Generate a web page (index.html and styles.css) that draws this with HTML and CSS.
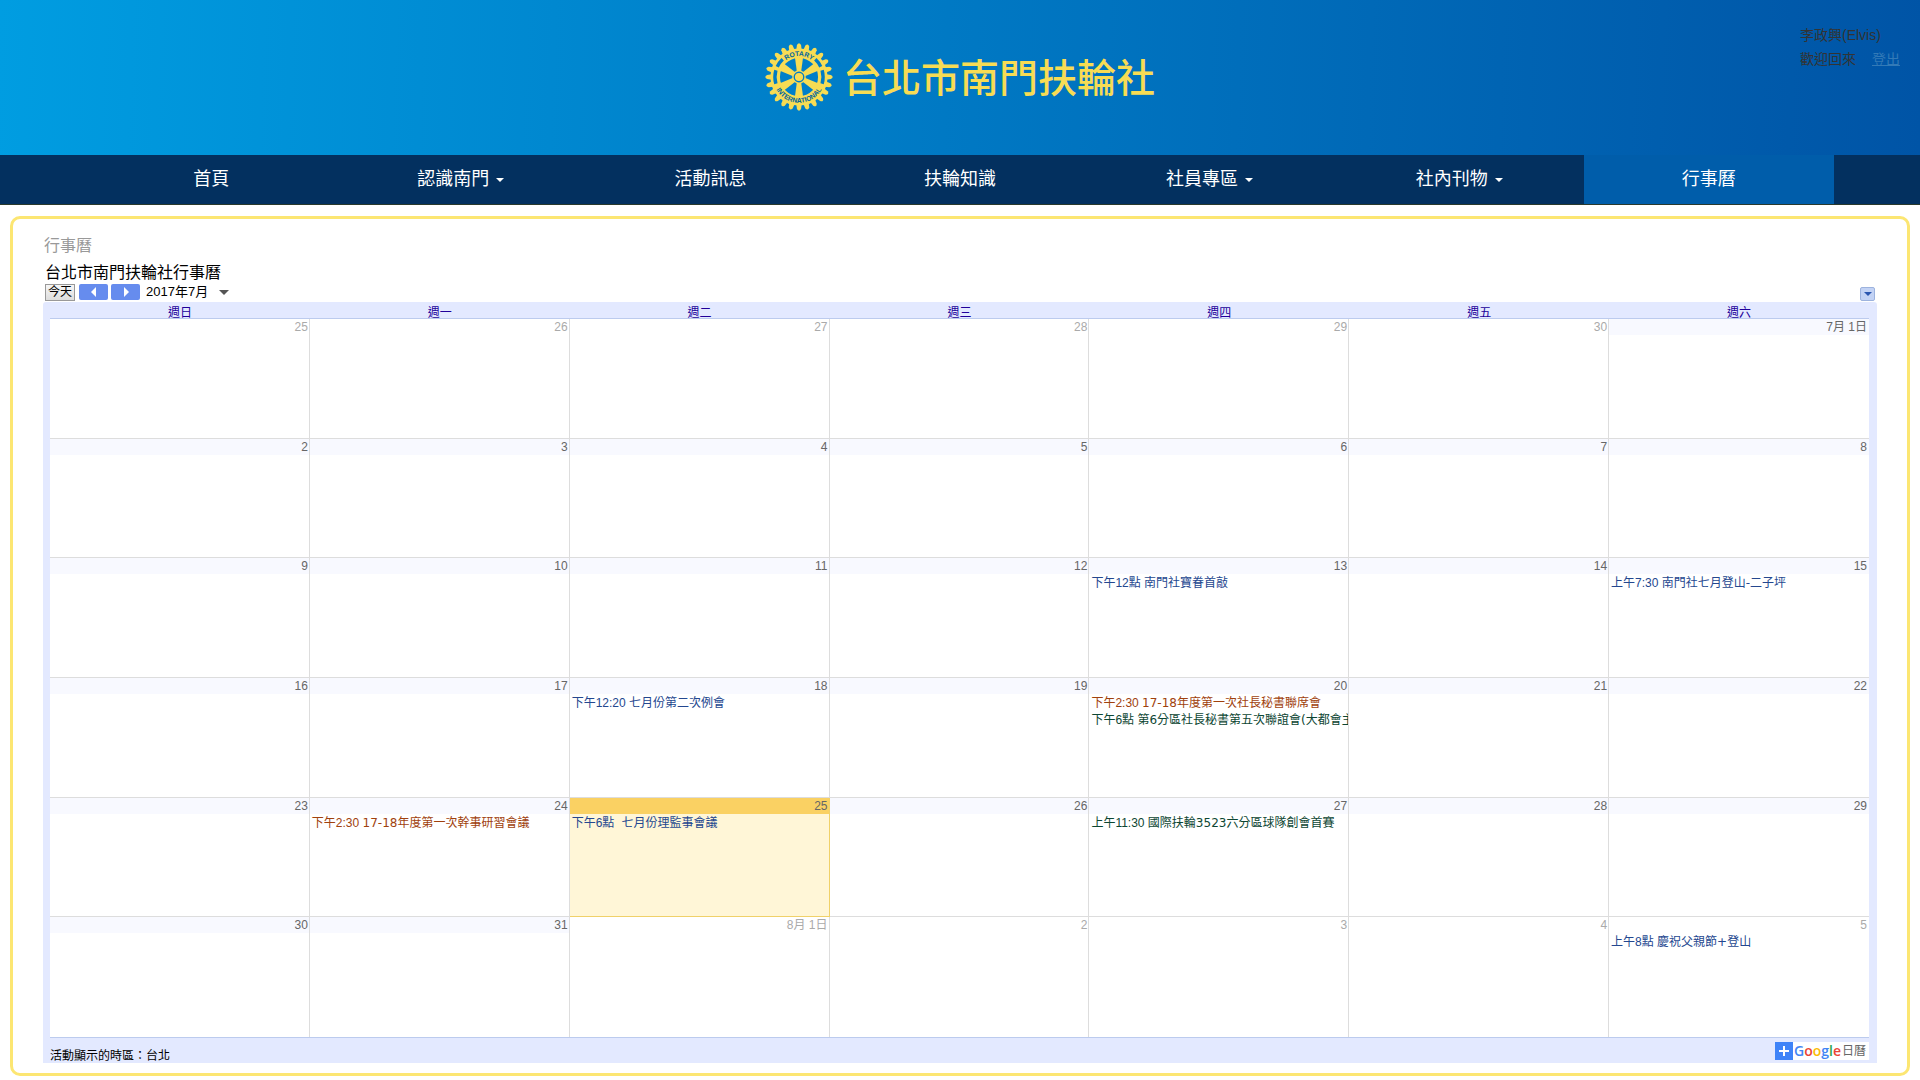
FILE: index.html
```html
<!DOCTYPE html>
<html lang="zh-Hant">
<head>
<meta charset="utf-8">
<meta name="viewport" content="width=device-width, initial-scale=1">
<title>台北市南門扶輪社</title>
<link rel="stylesheet" href="styles.css">
</head>
<body>
<header class="banner">
  <h1 class="brand">
    <svg class="wheel" viewBox="-50 -50 100 100" aria-hidden="true">
      <defs>
        <path id="arc-top" d="M-31 0 A31 31 0 0 1 31 0"/>
        <path id="arc-bottom" d="M-38 0 A38 38 0 0 0 38 0"/>
        <path id="tooth" d="M-4 -40 L-3 -47 Q0 -52 3 -47 L4 -40 Z"/>
        <path id="spoke" d="M-6 -29 L-3 -7 H3 L6 -29 Z"/>
      </defs>
      <g class="gold" id="teeth"></g>
      <circle class="gold-line" r="35" stroke-width="14"/>
      <path class="gap-line" d="M-34 -10 A35.500 35.500 0 0 0 -34 10 M34 -10 A35.500 35.500 0 0 1 34 10" stroke-width="5"/>
      <path class="gap-line" d="M-32 -15 A35.500 35.500 0 0 1 -24 -26 M32 -15 A35.500 35.500 0 0 0 24 -26" stroke-width="5"/>
      <g class="gold" id="spokes"></g>
      <circle class="gold" r="10"/>
      <circle class="gap-line" r="7" stroke-width="2"/>
      <text class="wheel-text"><textPath href="#arc-top" startOffset="50%">ROTARY</textPath></text>
      <text class="wheel-text"><textPath href="#arc-bottom" startOffset="50%">INTERNATIONAL</textPath></text>
    </svg>
    <span>台北市南門扶輪社</span>
  </h1>
  <div class="user">
    <div>李政興(Elvis)</div>
    <div class="user-row"><span>歡迎回來</span><a href="#logout">登出</a></div>
  </div>
</header>
<nav class="nav">
  <a href="#home">首頁</a>
  <a href="#about">認識南門<i class="caret"></i></a>
  <a href="#news">活動訊息</a>
  <a href="#knowledge">扶輪知識</a>
  <a href="#members">社員專區<i class="caret"></i></a>
  <a href="#journal">社內刊物<i class="caret"></i></a>
  <a href="#calendar" class="active">行事曆</a>
</nav>
<main class="panel">
  <h2 class="crumb">行事曆</h2>
  <h3 class="cal-title">台北市南門扶輪社行事曆</h3>
  <div class="toolbar">
    <button class="today-btn" type="button">今天</button>
    <button class="step" type="button" aria-label="上個月"><svg viewBox="0 0 6 10"><path d="M5 0V10L0 5Z"/></svg></button>
    <button class="step" type="button" aria-label="下個月"><svg viewBox="0 0 6 10"><path d="M1 0V10L6 5Z"/></svg></button>
    <button class="month" type="button">2017年7月<i class="caret-lg"></i></button>
    <button class="options" type="button" aria-label="選項"><i class="caret-blue"></i></button>
  </div>
  <section class="calendar">
    <table class="grid">
      <thead><tr><th>週日</th><th>週一</th><th>週二</th><th>週三</th><th>週四</th><th>週五</th><th>週六</th></tr></thead>
      <tbody>
        <tr>
          <td class="other"><div class="date">25</div></td>
          <td class="other"><div class="date">26</div></td>
          <td class="other"><div class="date">27</div></td>
          <td class="other"><div class="date">28</div></td>
          <td class="other"><div class="date">29</div></td>
          <td class="other"><div class="date">30</div></td>
          <td><div class="date">7月 1日</div></td>
        </tr>
        <tr>
          <td><div class="date">2</div></td>
          <td><div class="date">3</div></td>
          <td><div class="date">4</div></td>
          <td><div class="date">5</div></td>
          <td><div class="date">6</div></td>
          <td><div class="date">7</div></td>
          <td><div class="date">8</div></td>
        </tr>
        <tr>
          <td><div class="date">9</div></td>
          <td><div class="date">10</div></td>
          <td><div class="date">11</div></td>
          <td><div class="date">12</div></td>
          <td><div class="date">13</div><a class="event blue" href="#e1">下午12點 <span>南門社寶眷首敲</span></a></td>
          <td><div class="date">14</div></td>
          <td><div class="date">15</div><a class="event blue" href="#e2">上午7:30 <span>南門社七月登山-二子坪</span></a></td>
        </tr>
        <tr>
          <td><div class="date">16</div></td>
          <td><div class="date">17</div></td>
          <td><div class="date">18</div><a class="event blue" href="#e3">下午12:20 <span>七月份第二次例會</span></a></td>
          <td><div class="date">19</div></td>
          <td><div class="date">20</div><a class="event rust" href="#e4">下午2:30 <span>17-18年度第一次社長秘書聯席會</span></a><a class="event green" href="#e5">下午6點 <span>第6分區社長秘書第五次聯誼會(大都會主</span></a></td>
          <td><div class="date">21</div></td>
          <td><div class="date">22</div></td>
        </tr>
        <tr>
          <td><div class="date">23</div></td>
          <td><div class="date">24</div><a class="event rust" href="#e6">下午2:30 <span>17-18年度第一次幹事研習會議</span></a></td>
          <td class="today"><div class="date">25</div><a class="event blue" href="#e7">下午6點 <span>&nbsp;七月份理監事會議</span></a></td>
          <td><div class="date">26</div></td>
          <td><div class="date">27</div><a class="event green" href="#e8">上午11:30 <span>國際扶輪3523六分區球隊創會首賽</span></a></td>
          <td><div class="date">28</div></td>
          <td><div class="date">29</div></td>
        </tr>
        <tr>
          <td><div class="date">30</div></td>
          <td><div class="date">31</div></td>
          <td class="other"><div class="date">8月 1日</div></td>
          <td class="other"><div class="date">2</div></td>
          <td class="other"><div class="date">3</div></td>
          <td class="other"><div class="date">4</div></td>
          <td class="other"><div class="date">5</div><a class="event blue" href="#e9">上午8點 <span>慶祝父親節+登山</span></a></td>
        </tr>
      </tbody>
    </table>
    <footer class="cal-foot">
      <span>活動顯示的時區：台北</span>
      <a class="gcal" href="#google">
        <svg class="plus" viewBox="0 0 18 18" aria-hidden="true"><path d="M9 4V14M4 9H14"/></svg>
        <span class="google"><b class="g-blue">G</b><b class="g-red">o</b><b class="g-yellow">o</b><b class="g-blue">g</b><b class="g-green">l</b><b class="g-red">e</b></span>
        <span class="g-label">日曆</span>
      </a>
    </footer>
  </section>
</main>
<script src="wheel.js"></script>
</body>
</html>
```
FILE: wheel.js
```js
// Repeats the tooth and spoke shapes round the wheel.
function ring(groupId, shapeId, count) {
  const group = document.getElementById(groupId);
  for (let i = 0; i < count; i++) {
    const use = document.createElementNS("http://www.w3.org/2000/svg", "use");
    use.setAttribute("href", "#" + shapeId);
    use.setAttribute("transform", "rotate(" + (i * 360 / count) + ")");
    group.appendChild(use);
  }
}
ring("teeth", "tooth", 24);
ring("spokes", "spoke", 6);
```
FILE: styles.css
```css
* { box-sizing: border-box; }

body {
  margin: 0;
  background: #fff;
  color: #333;
  font: 14px/24px "Liberation Sans", "Noto Sans CJK TC", sans-serif;
}

h1, h2, h3 { margin: 0; font-weight: 400; }
a { text-decoration: none; }
button { margin: 0; padding: 0; font: inherit; cursor: pointer; }

/* Banner */
.banner {
  position: relative;
  display: flex;
  justify-content: center;
  padding: 43px 16px 44px;
  background: linear-gradient(92deg, #009de1 0%, #0054a6 100%);
}
.brand {
  display: flex;
  align-items: flex-start;
  gap: 10px;
  color: #f7dc54;
  font: 500 39px/64px "Noto Sans CJK TC", sans-serif;
}
.wheel { width: 68px; height: 68px; }
.gold { fill: #f7dc54; }
.gold-line { fill: none; stroke: #f7dc54; }
.gap-line { fill: none; stroke: #007cc5; }
.wheel-text {
  fill: #00659f;
  font: 700 10px "Liberation Sans", sans-serif;
  text-anchor: middle;
}
.user {
  position: absolute;
  top: 23px;
  right: 20px;
  width: 100px;
}
.user-row { display: flex; justify-content: space-between; }
.user a { color: #337ab7; text-decoration: underline; }

/* Navigation */
.nav {
  display: flex;
  justify-content: center;
  background: #03305f;
  border-bottom: 1px solid #2b3a2c;
}
.nav a {
  flex: 0 0 13%;
  color: #fff;
  font-size: 18px;
  line-height: 49px;
  text-align: center;
}
.nav .active { background: #005daa; }
.caret {
  display: inline-block;
  margin-left: 7px;
  border: 4px solid transparent;
  border-top-color: #fff;
  border-bottom: 0;
  vertical-align: middle;
}

/* Content panel */
.panel {
  margin: 11px 10px 4px;
  padding: 14px 30px 10px;
  border: 3px solid #fce672;
  border-radius: 10px;
}
.crumb { padding-left: 1px; color: #999; font-size: 16px; line-height: 26px; }
.cal-title { padding: 3px 2px 0; color: #000; font-size: 16px; line-height: 22px; }
.toolbar {
  display: flex;
  align-items: flex-start;
  gap: 3px;
  height: 17px;
  padding: 0 2px;
  color: #000;
}
.today-btn {
  width: 30px;
  height: 17px;
  margin-right: 1px;
  border: 1px solid #999;
  background: linear-gradient(#f6f6f6, #ddd);
  color: #000;
  font-size: 12px;
  line-height: 15px;
}
.step {
  display: flex;
  align-items: center;
  justify-content: center;
  width: 29px;
  height: 16px;
  border: 0;
  border-radius: 2px;
  background: #668cee;
}
.step svg { width: 6px; height: 10px; fill: #fff; }
.month {
  display: flex;
  align-items: center;
  gap: 11px;
  padding-left: 3px;
  border: 0;
  background: none;
  color: #000;
  font-size: 13px;
  line-height: 16px;
}
.caret-lg {
  border: 5px solid transparent;
  border-top-color: #555;
  border-bottom: 0;
}
.options {
  display: flex;
  align-self: flex-end;
  align-items: center;
  justify-content: center;
  width: 15px;
  height: 14px;
  margin-left: auto;
  border: 1px solid #9db3de;
  border-radius: 2px;
  background: #c3d3f5;
}
.caret-blue {
  border: 4px solid transparent;
  border-top-color: #2a56b0;
  border-bottom: 0;
}

/* Calendar */
.calendar {
  margin-top: 1px;
  padding: 0 8px 0 7px;
  border-radius: 3px 3px 0 0;
  background: #e3e9ff;
}
.grid {
  width: 100%;
  height: 736px;
  table-layout: fixed;
  border-collapse: separate;
  border-spacing: 0;
  border-bottom: 1px solid #bccbee;
  font-size: 12px;
  line-height: 16px;
}
.grid th {
  height: 17px;
  padding: 6px 0 0;
  border-bottom: 1px solid #bccbee;
  color: #20009a;
  font-weight: 400;
  line-height: 10px;
}
.grid td {
  height: 119px;
  padding: 0;
  border-right: 1px solid #ddd;
  border-bottom: 1px solid #ddd;
  background: #fff;
  vertical-align: top;
}
.grid td:last-child { border-right: 0; }
.grid tbody tr:last-child td { border-bottom: 0; }
.date {
  margin-bottom: 1px;
  padding-right: 1px;
  background: #f8f9ff;
  color: #666;
  text-align: right;
}
.grid td:last-child .date { padding-right: 2px; }
.other .date { background: #fff; color: #aaa; }
.event {
  display: block;
  overflow: hidden;
  padding-left: 2px;
  line-height: 17px;
  white-space: nowrap;
}
.event span { font-family: "DejaVu Sans", "Noto Sans CJK TC", sans-serif; }
.blue { color: #24478f; }
.rust { color: #a0410d; }
.green { color: #0d4633; }
.grid .today {
  border-color: #f0d169;
  background: #fff6d7;
}
.today .date { background: #fad163; }
.cal-foot {
  display: flex;
  justify-content: space-between;
  height: 25px;
  padding-top: 4px;
  color: #000;
  font-size: 12px;
  line-height: 28px;
}
.gcal {
  display: flex;
  align-items: center;
  gap: 1px;
  height: 18px;
  padding-right: 3px;
  background: #fff;
  color: #666;
  line-height: 18px;
}
.plus { width: 18px; height: 18px; background: #3f83f8; }
.plus path { stroke: #fff; stroke-width: 2; }
.google { font: 14px/18px "Open Sans", sans-serif; }
.google b { font-weight: 600; }
.g-label { font-size: 12px; }
.g-blue { color: #4285f4; }
.g-red { color: #ea4335; }
.g-yellow { color: #fbbc05; }
.g-green { color: #34a853; }
```
